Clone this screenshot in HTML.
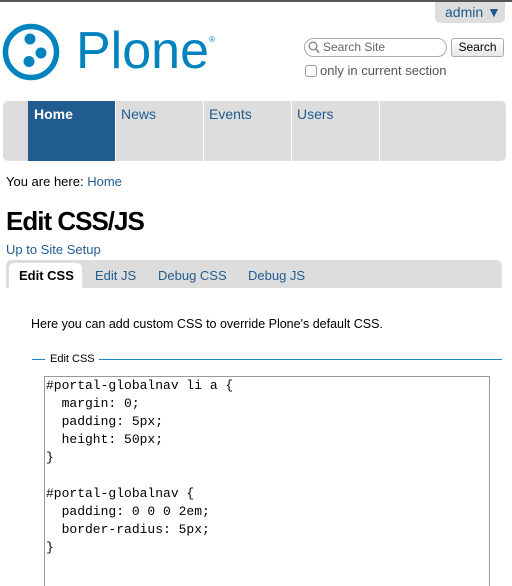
<!DOCTYPE html>
<html><head><meta charset="utf-8"><style>
*{margin:0;padding:0;box-sizing:border-box}
body{width:512px;height:575px;overflow:hidden;background:#fff;font-family:"Liberation Sans",sans-serif;position:relative;color:#000}
.a{position:absolute}
a{color:#205c90;text-decoration:none}
</style></head><body>
<div class="a" style="left:0;top:0;width:512px;height:2px;background:#555"></div>
<div class="a" style="left:435px;top:2px;width:70px;height:21px;background:#ddd;border-radius:0 0 6px 6px;color:#205c90;font-size:14px;padding:2px 0 0 10px">admin ▼</div>
<svg class="a" style="left:2px;top:23px" width="58" height="58" viewBox="0 0 58 58">
<circle cx="29" cy="29" r="25.5" fill="none" stroke="#0083be" stroke-width="5.5"/>
<circle cx="28" cy="16" r="5.5" fill="#0083be"/>
<circle cx="39" cy="30" r="5.5" fill="#0083be"/>
<circle cx="27" cy="38.5" r="5.5" fill="#0083be"/>
</svg>
<div class="a" style="left:76px;top:21px;font-size:52px;color:#0083be">Plone</div>
<div class="a" style="left:209px;top:35px;font-size:8px;color:#0083be">®</div>
<div class="a" style="left:304px;top:38px;width:143px;height:19px;border:1px solid #aaa;border-radius:10px;font-size:12px;color:#666;padding:1px 0 0 18px">Search Site</div>
<svg class="a" style="left:308px;top:41px" width="12" height="13"><circle cx="5" cy="5" r="3.8" fill="none" stroke="#888" stroke-width="1.4"/><line x1="8" y1="8" x2="11" y2="12" stroke="#888" stroke-width="1.6"/></svg>
<div class="a" style="left:451px;top:38px;width:53px;height:19px;border:1px solid #aaa;border-radius:3px;background:linear-gradient(#fff,#e8e8e8);font-size:12px;text-align:center;line-height:17px">Search</div>
<div class="a" style="left:305px;top:65px;width:12px;height:12px;border:1px solid #999;border-radius:3px"></div>
<div class="a" style="left:320px;top:63px;font-size:13px;color:#555">only in current section</div>
<div class="a" style="left:3px;top:101px;width:503px;height:60px;background:#ddd;border-radius:5px"></div>
<div class="a" style="left:28px;top:101px;width:87px;height:60px;background:#205c90;color:#fff;font-weight:bold;font-size:14px;padding:5px 0 0 6px">Home</div>
<div class="a" style="left:115px;top:101px;width:1px;height:60px;background:#fff"></div>
<div class="a" style="left:203px;top:101px;width:1px;height:60px;background:#fff"></div>
<div class="a" style="left:291px;top:101px;width:1px;height:60px;background:#fff"></div>
<div class="a" style="left:379px;top:101px;width:1px;height:60px;background:#fff"></div>
<div class="a" style="left:121px;top:106px;font-size:14px;color:#205c90">News</div>
<div class="a" style="left:209px;top:106px;font-size:14px;color:#205c90">Events</div>
<div class="a" style="left:297px;top:106px;font-size:14px;color:#205c90">Users</div>
<div class="a" style="left:6px;top:174px;font-size:13px">You are here: <a>Home</a></div>
<div class="a" style="left:6px;top:206px;font-size:26px;font-weight:bold;letter-spacing:-1px">Edit CSS/JS</div>
<div class="a" style="left:6px;top:242px;font-size:13px"><a>Up to Site Setup</a></div>
<div class="a" style="left:6px;top:260px;width:496px;height:28px;background:#ddd;border-radius:6px 6px 0 0"></div>
<div class="a" style="left:9px;top:263px;width:73px;height:25px;background:#fff;border-radius:5px 5px 0 0;font-weight:bold;font-size:13px;padding:5px 0 0 10px">Edit CSS</div>
<div class="a" style="left:95px;top:268px;font-size:13px;color:#205c90">Edit JS</div>
<div class="a" style="left:158px;top:268px;font-size:13px;color:#205c90">Debug CSS</div>
<div class="a" style="left:248px;top:268px;font-size:13px;color:#205c90">Debug JS</div>
<div class="a" style="left:31px;top:317px;font-size:12.5px">Here you can add custom CSS to override Plone's default CSS.</div>
<div class="a" style="left:32px;top:359px;width:13px;height:1px;background:#1a8bc3"></div>
<div class="a" style="left:50px;top:353px;font-size:11px">Edit CSS</div>
<div class="a" style="left:99px;top:359px;width:403px;height:1px;background:#1a8bc3"></div>
<div class="a" style="left:44px;top:376px;width:446px;height:210px;border:1px solid #999;border-bottom:none"></div>
<pre class="a" style="left:46px;top:377px;font-family:'Liberation Mono',monospace;font-size:13px;line-height:18px;color:#000">#portal-globalnav li a {
  margin: 0;
  padding: 5px;
  height: 50px;
}

#portal-globalnav {
  padding: 0 0 0 2em;
  border-radius: 5px;
}</pre>
</body></html>
